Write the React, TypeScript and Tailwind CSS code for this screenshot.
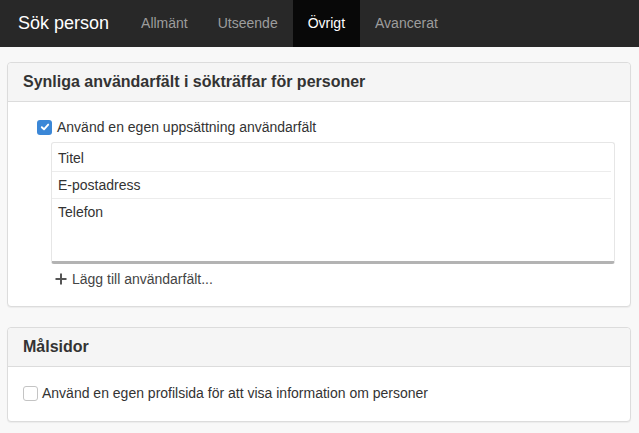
import React from 'react';

const tabs = ['Allmänt', 'Utseende', 'Övrigt', 'Avancerat'];
const fields = ['Titel', 'E-postadress', 'Telefon'];

function CheckBox({ checked }: { checked?: boolean }) {
  if (checked) {
    return (
      <span className="flex h-[15px] w-[15px] shrink-0 items-center justify-center rounded-[3px] bg-[#3b87d7]">
        <svg width="10" height="10" viewBox="0 0 10 10">
          <path d="M1.8 5.2 L4 7.3 L8.2 2.6" fill="none" stroke="#fff" strokeWidth="1.9" strokeLinecap="round" strokeLinejoin="round" />
        </svg>
      </span>
    );
  }
  return <span className="h-[15px] w-[15px] shrink-0 rounded-[3px] border border-[#c4c4c4] bg-white" />;
}

function Panel({ title, children }: { title: string; children: React.ReactNode }) {
  return (
    <div className="rounded-[4px] border border-[#dcdcdc] bg-white shadow-[0_1px_1px_rgba(0,0,0,0.05)]">
      <div className="flex h-[39px] items-center rounded-t-[4px] border-b border-[#dcdcdc] bg-[#f5f5f5] px-[15px]">
        <h3 className="text-[16px] font-bold text-[#333]">{title}</h3>
      </div>
      {children}
    </div>
  );
}

export default function App() {
  return (
    <div className="min-h-[433px] bg-[#f8f8f8] font-['Liberation_Sans',Arial,sans-serif] text-[14px] text-[#333]">
      {/* Top navigation */}
      <nav className="flex h-[47px] items-stretch bg-[#282828]">
        <div className="flex items-center pl-[18px] pr-[17px] text-[18px] text-white">Sök person</div>
        {tabs.map((t) => (
          <div
            key={t}
            className={
              t === 'Övrigt'
                ? 'flex items-center bg-[#080808] px-[15px] text-white'
                : 'flex items-center px-[15px] text-[#9d9d9d]'
            }
          >
            {t}
          </div>
        ))}
      </nav>

      <div className="flex flex-col gap-[20px] pl-[7px] pr-[8px] pt-[15px]">
        <Panel title="Synliga användarfält i sökträffar för personer">
          <div className="px-[15px] pb-[17px] pt-[15px]">
            <div className="ml-[14px] flex h-[20px] items-center gap-[5px]">
              <CheckBox checked />
              <span>Använd en egen uppsättning användarfält</span>
            </div>
            <div className="ml-[28px] mt-[5px] min-h-[122px] rounded-[3px] border border-b-[3px] border-[#e6e6e6] border-b-[#b3b3b3] pt-[2px]">
              {fields.map((f, i) => (
                <div
                  key={f}
                  className={
                    i < fields.length - 1
                      ? 'mr-[3px] flex h-[27px] items-center border-b border-[#ececec] pl-[6px]'
                      : 'mr-[3px] flex h-[27px] items-center pl-[6px]'
                  }
                >
                  {f}
                </div>
              ))}
            </div>
            <div className="ml-[32px] mt-[5px] flex h-[20px] items-center gap-[5px] text-[#444]">
              <svg width="12" height="12" viewBox="0 0 12 12">
                <rect x="5" y="0.5" width="2" height="11" fill="#555" />
                <rect x="0.5" y="5" width="11" height="2" fill="#555" />
              </svg>
              <span>Lägg till användarfält...</span>
            </div>
          </div>
        </Panel>

        <Panel title="Målsidor">
          <div className="px-[15px] pb-[18px] pt-[16px]">
            <div className="flex h-[20px] items-center gap-[4px]">
              <CheckBox />
              <span>Använd en egen profilsida för att visa information om personer</span>
            </div>
          </div>
        </Panel>
      </div>
    </div>
  );
}
